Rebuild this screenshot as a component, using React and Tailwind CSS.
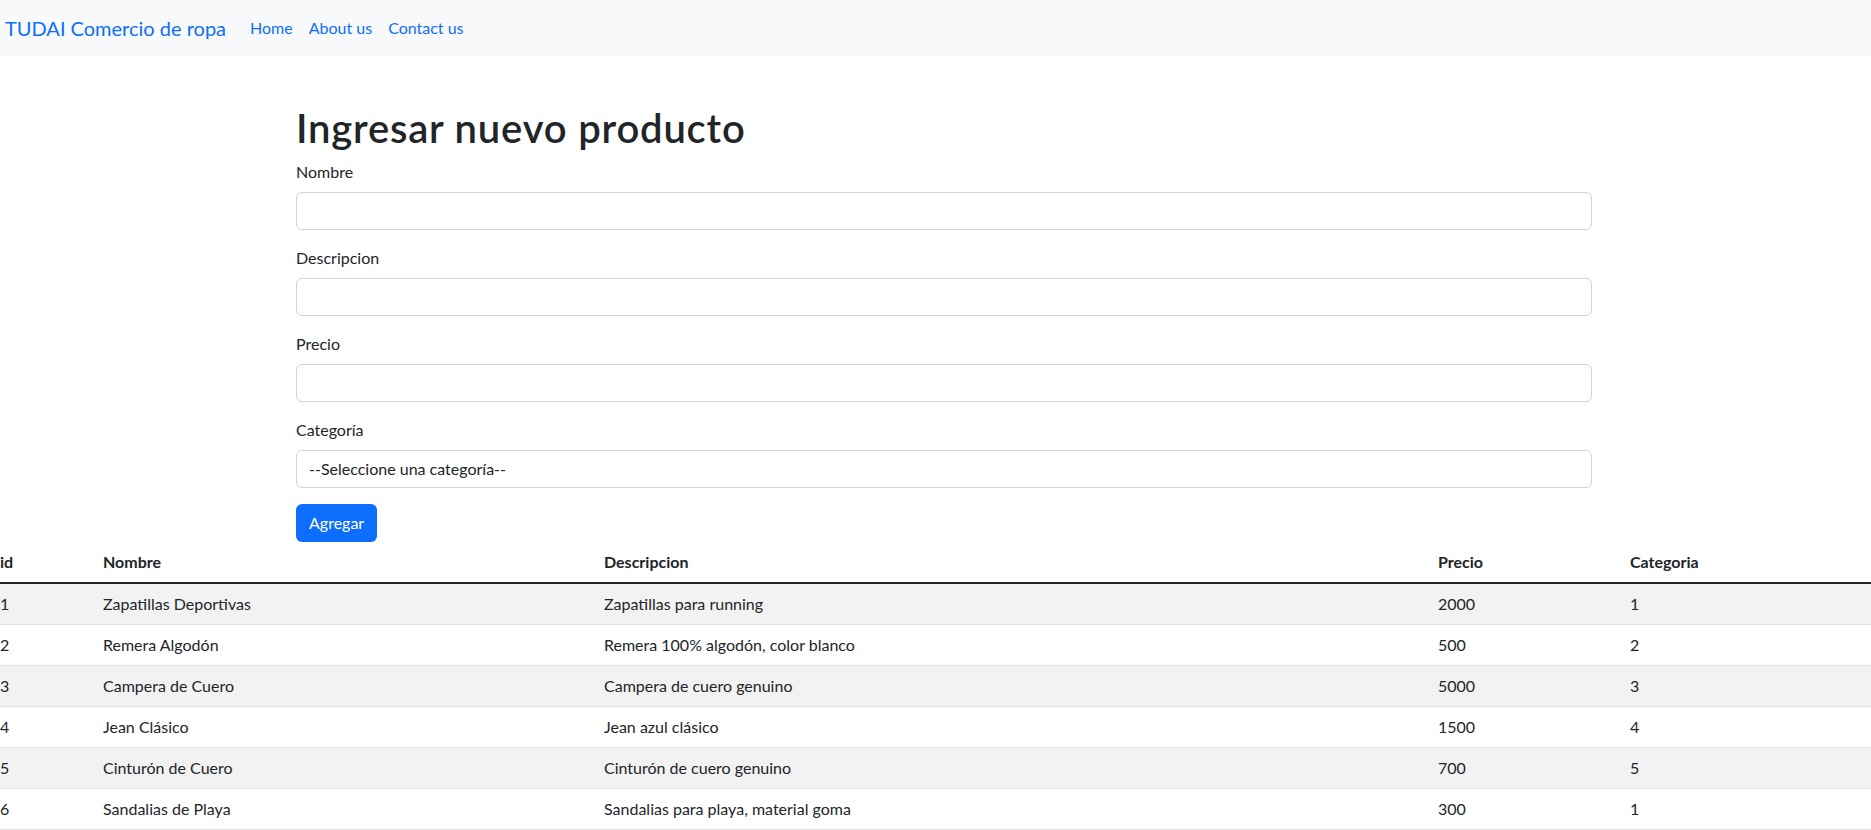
import React from 'react';

const productos = [
  { id: 1, nombre: 'Zapatillas Deportivas', descripcion: 'Zapatillas para running', precio: 2000, categoria: 1 },
  { id: 2, nombre: 'Remera Algodón', descripcion: 'Remera 100% algodón, color blanco', precio: 500, categoria: 2 },
  { id: 3, nombre: 'Campera de Cuero', descripcion: 'Campera de cuero genuino', precio: 5000, categoria: 3 },
  { id: 4, nombre: 'Jean Clásico', descripcion: 'Jean azul clásico', precio: 1500, categoria: 4 },
  { id: 5, nombre: 'Cinturón de Cuero', descripcion: 'Cinturón de cuero genuino', precio: 700, categoria: 5 },
  { id: 6, nombre: 'Sandalias de Playa', descripcion: 'Sandalias para playa, material goma', precio: 300, categoria: 1 },
];

const Field = ({ label, children }) => (
  <div className="mb-4">
    <label className="block mb-2 leading-6">{label}</label>
    {children}
  </div>
);

const inputClass =
  'block w-full h-[38px] px-3 border border-[#ced4da] rounded-[6px] bg-white text-base outline-none';

const App = () => {
  return (
    <div className="min-h-screen bg-white text-[#212529] text-base font-['Lato',sans-serif]">
      <nav className="h-14 bg-[#f8f9fa] flex items-center pl-[5px]">
        <a href="#" className="text-xl text-[#0d6efd] mr-4 leading-[30px]">
          TUDAI Comercio de ropa
        </a>
        <ul className="flex">
          <li><a href="#" className="block px-2 py-2 text-[#0d6efd]">Home</a></li>
          <li><a href="#" className="block px-2 py-2 text-[#0d6efd]">About us</a></li>
          <li><a href="#" className="block px-2 py-2 text-[#0d6efd]">Contact us</a></li>
        </ul>
      </nav>

      <div className="ml-[296px] w-[1296px]">
        <h1 className="mt-12 mb-2 text-[40px] leading-[48px] font-semibold tracking-[0.8px]">Ingresar nuevo producto</h1>
        <form>
          <Field label="Nombre">
            <input type="text" className={inputClass} />
          </Field>
          <Field label="Descripcion">
            <input type="text" className={inputClass} />
          </Field>
          <Field label="Precio">
            <input type="text" className={inputClass} />
          </Field>
          <Field label="Categoría">
            <select className={inputClass + ' appearance-none text-[#212529]'}>
              <option>--Seleccione una categoría--</option>
            </select>
          </Field>
          <button type="button" className="h-[38px] px-[13px] rounded-[6px] bg-[#0d6efd] text-white">
            Agregar
          </button>
        </form>
      </div>

      <table className="w-full table-fixed border-collapse text-left">
        <colgroup>
          <col className="w-[95px]" />
          <col className="w-[501px]" />
          <col className="w-[834px]" />
          <col className="w-[192px]" />
          <col />
        </colgroup>
        <thead>
          <tr>
            <th className="pr-2 py-2 leading-6 font-bold">id</th>
            <th className="px-2 py-2 leading-6 font-bold">Nombre</th>
            <th className="px-2 py-2 leading-6 font-bold">Descripcion</th>
            <th className="px-2 py-2 leading-6 font-bold">Precio</th>
            <th className="px-2 py-2 leading-6 font-bold">Categoria</th>
          </tr>
        </thead>
        <tbody className="border-t-2 border-[#212529]">
          {productos.map((p, i) => (
            <tr key={p.id} className={'border-b border-[#dee2e6] ' + (i % 2 === 0 ? 'bg-[#f2f2f2]' : 'bg-white')}>
              <td className="pr-2 py-2 leading-6">{p.id}</td>
              <td className="px-2 py-2 leading-6">{p.nombre}</td>
              <td className="px-2 py-2 leading-6">{p.descripcion}</td>
              <td className="px-2 py-2 leading-6">{p.precio}</td>
              <td className="px-2 py-2 leading-6">{p.categoria}</td>
            </tr>
          ))}
        </tbody>
      </table>
    </div>
  );
};

export default App;
